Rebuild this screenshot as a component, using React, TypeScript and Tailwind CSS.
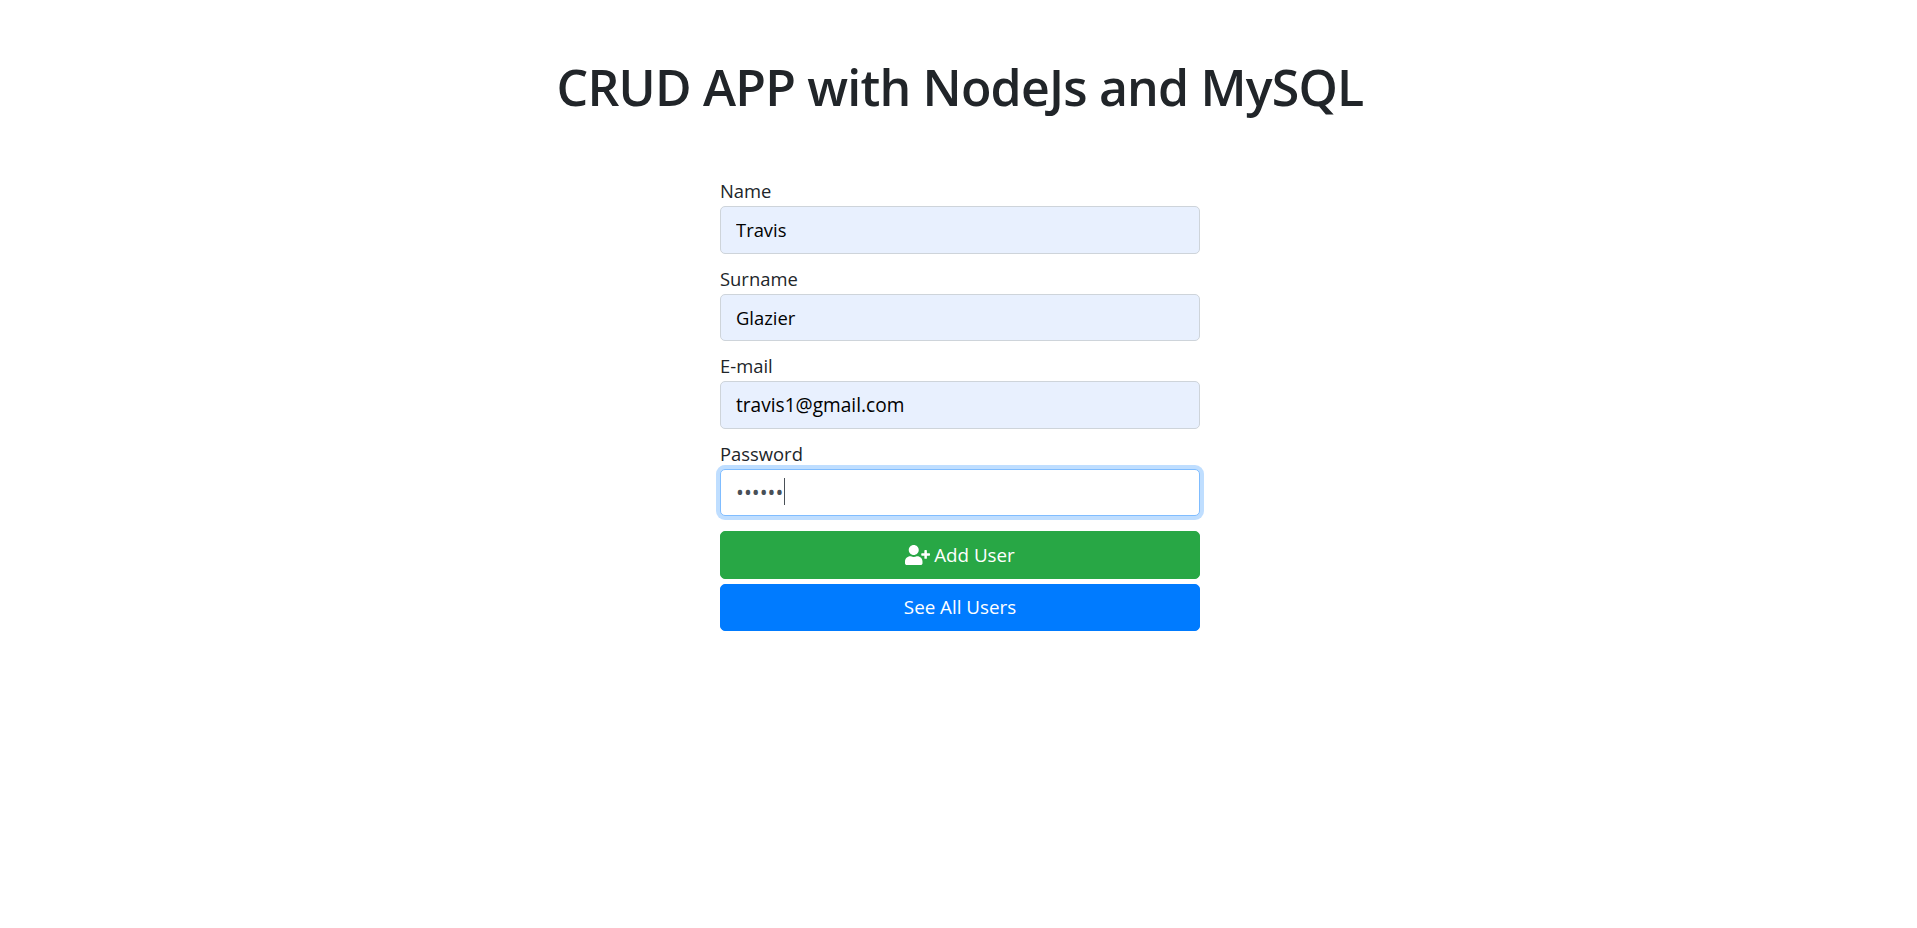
import { FaUserPlus } from "react-icons/fa";

const FIELDS = [
  { label: "Name", value: "Travis", type: "text", size: "text-[18.4px]" },
  { label: "Surname", value: "Glazier", type: "text", size: "text-[18.4px]" },
  { label: "E-mail", value: "travis1@gmail.com", type: "email", size: "text-[19.1px]" },
] as const;

const FONT = "font-['Open_Sans','Noto_Sans',sans-serif]";

export default function App() {
  return (
    <div className={`${FONT} min-h-[928px] bg-white pl-[3px] text-[#212529]`}>
      <h1 className="pt-[57px] pb-px text-center text-[50px] leading-[60px] font-semibold tracking-[-0.016em]">
        CRUD APP with NodeJs and MySQL
      </h1>
      <form className="mx-auto mt-[58px] w-[480px]">
        {FIELDS.map((field) => (
          <div key={field.label} className="mb-[10px]">
            <label className="block text-[18.4px] leading-[30px]">{field.label}</label>
            <input
              type={field.type}
              value={field.value}
              readOnly
              className={`${field.size} block h-[47.5px] w-full rounded-[5px] border border-[#ced4da] bg-[#e8f0fe] px-[15px] text-black outline-none`}
            />
          </div>
        ))}
        <div className="mb-[15px]">
          <label className="block text-[18.4px] leading-[30px]">Password</label>
          <div className="relative">
            <input
              type="password"
              value="secret"
              readOnly
              className="block h-[47.5px] w-full rounded-[5px] border border-[#80bdff] bg-white px-[15px] text-[21px] text-[#495057] shadow-[0_0_0_4px_rgba(0,123,255,0.25)] outline-none"
            />
            <span className="absolute top-[9px] left-[64px] h-[27px] w-px bg-[#495057]" />
          </div>
        </div>
        <button
          type="button"
          className="mb-[5px] flex h-[47.5px] w-full items-center justify-center gap-[4px] rounded-[5px] border border-[#28a745] bg-[#28a745] text-[18.8px] text-white"
        >
          <FaUserPlus className="h-[20px] w-[25px]" />
          Add User
        </button>
        <button
          type="button"
          className="flex h-[47.5px] w-full items-center justify-center rounded-[5px] border border-[#007bff] bg-[#007bff] text-[18.8px] text-white"
        >
          See All Users
        </button>
      </form>
    </div>
  );
}
